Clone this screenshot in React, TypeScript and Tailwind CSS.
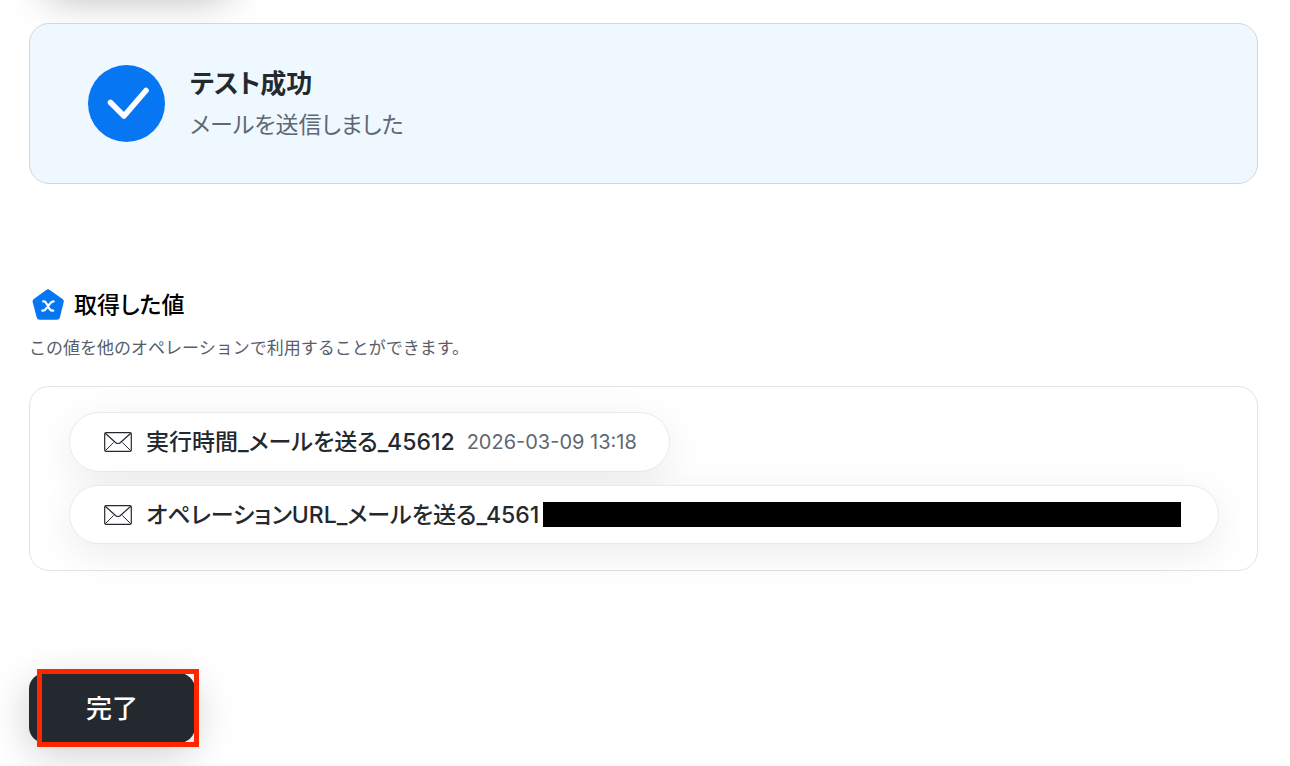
import type { ReactNode } from "react";

interface ValueChipProps {
  label: string;
  className?: string;
  children: ReactNode;
}

function CheckCircle() {
  return (
    <svg viewBox="0 0 77 77" className="size-[77px] shrink-0" aria-hidden="true">
      <circle cx="38.5" cy="38.5" r="38.5" fill="#0676f2" />
      <path
        d="M22.5 37.5 L36 51 L58 25.5"
        fill="none"
        stroke="#fff"
        strokeWidth="5.6"
        strokeLinecap="round"
        strokeLinejoin="round"
      />
    </svg>
  );
}

function PentagonIcon() {
  return (
    <svg viewBox="0 0 32 32" className="size-8 shrink-0" aria-hidden="true">
      <path
        d="M16 3.4 L28.8 12.4 L25 27.8 H7.6 L3.6 12.4 Z"
        fill="#0676f2"
        stroke="#0676f2"
        strokeWidth="6"
        strokeLinejoin="round"
      />
      <path
        d="M11.2 12.4 C12.8 12.2 13.6 12.8 14.3 14.2 L17.6 20 C18.4 21.5 19.4 22 21.2 21.6 M21.6 12.4 C20 12.2 19.2 13 18.2 14.4 L14 19.8 C13 21.2 12.2 21.8 10.4 21.6"
        fill="none"
        stroke="#fff"
        strokeWidth="2.3"
        strokeLinecap="round"
      />
    </svg>
  );
}

function EnvelopeIcon() {
  return (
    <svg viewBox="0 0 28 20" className="h-5 w-7 shrink-0" aria-hidden="true">
      <g fill="none" stroke="#24292f" strokeWidth="1.2" strokeLinejoin="round">
        <rect x="0.7" y="0.7" width="26.6" height="18.6" rx="1.4" />
        <path d="M1.2 1.2 L11.8 10.7 Q14 12.3 16.2 10.7 L26.8 1.2" />
        <path d="M1.2 18.8 L9.6 10.5 M26.8 18.8 L18.4 10.5" strokeWidth="1" />
      </g>
    </svg>
  );
}

function ValueChip({ label, className = "", children }: ValueChipProps) {
  return (
    <li
      className={`flex items-center rounded-full border border-[#e8eaf0] bg-white pr-8 pl-[34px] shadow-[0_10px_40px_rgba(0,0,0,0.08)] ${className}`}
    >
      <EnvelopeIcon />
      <span className="ml-3.5 whitespace-nowrap text-[23px] leading-8 font-medium text-[#24292f]">
        {label}
      </span>
      {children}
    </li>
  );
}

export default function App() {
  return (
    <main className="overflow-hidden bg-white pr-8 pb-[23px] pl-[29px] font-['Inter','Noto_Sans_CJK_JP',sans-serif] [font-feature-settings:'palt']">
      {/* lower edge of the test button, scrolled out of view */}
      <div className="-mt-[83px] ml-4 h-[70px] w-[184px] rounded-2xl bg-[#24292f] shadow-[0_10px_40px_rgba(0,0,0,0.3)]" />

      <section className="mt-9 flex items-center gap-[25px] rounded-[20px] border border-[#d0d7e2] bg-[#f0f8ff] py-10 pl-[58px]">
        <CheckCircle />
        <div className="pt-0.5">
          <h2 className="text-[26px] leading-9 font-bold text-[#24292f]">テスト成功</h2>
          <p className="mt-[5px] text-[23px] leading-9 text-[#606873]">メールを送信しました</p>
        </div>
      </section>

      <section className="mt-[105px]">
        <div className="flex items-center gap-2.5 pl-[3px]">
          <PentagonIcon />
          <h2 className="text-[23px] leading-8 font-medium text-black">取得した値</h2>
        </div>
        <p className="mt-[13px] text-[17px] leading-7 text-[#57606a] [font-feature-settings:normal]">
          この値を他のオペレーションで利用することができます。
        </p>

        <ul className="mt-6 flex flex-col items-start gap-[13px] rounded-[20px] border border-[#e2e3e5] pt-[25px] pr-[38px] pb-[26px] pl-[39px]">
          <ValueChip label="実行時間_メールを送る_45612" className="h-[60px]">
            <time
              dateTime="2026-03-09T13:18"
              className="ml-3 whitespace-nowrap text-xl leading-8 text-[#606873]"
            >
              2026-03-09 13:18
            </time>
          </ValueChip>
          <ValueChip label="オペレーションURL_メールを送る_4561" className="h-[59px] w-full">
            <span className="mr-[5px] ml-1 h-[25px] flex-1 bg-black" />
          </ValueChip>
        </ul>
      </section>

      <div className="relative mt-[102px] w-fit">
        <button
          type="button"
          className="h-[70px] w-[166px] rounded-2xl bg-[#24292f] text-[26px] font-medium text-white shadow-[0_10px_40px_rgba(0,0,0,0.2)]"
        >
          完了
        </button>
        <div className="pointer-events-none absolute -top-1 -right-1 -bottom-1 left-2 border-[5px] border-[#ff2600]" />
      </div>
    </main>
  );
}
